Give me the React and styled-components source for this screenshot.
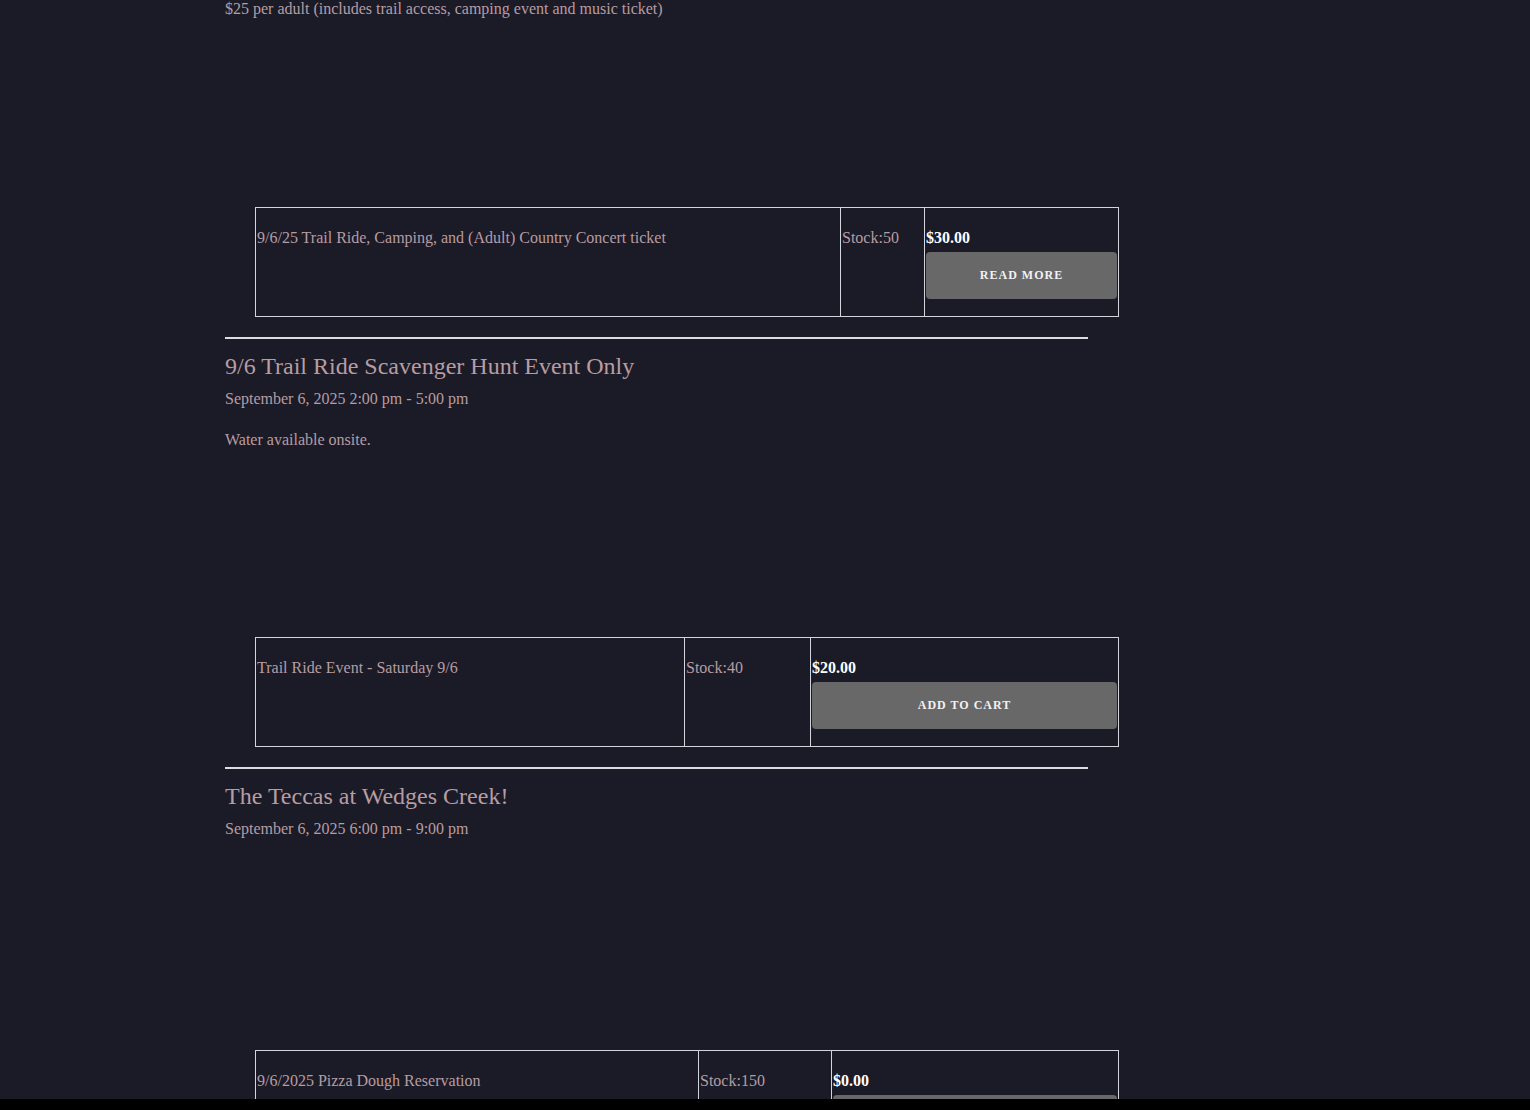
import React from 'react';
import styled, { createGlobalStyle } from 'styled-components';

const GlobalStyle = createGlobalStyle`
  html, body {
    margin: 0;
    padding: 0;
    background: #1a1b26;
  }
  body {
    font-family: "Liberation Serif", "Times New Roman", serif;
    font-size: 16px;
    color: #b89ca3;
  }
`;

const events = [
  {
    id: 'concert',
    tail: true,
    description: '$25 per adult (includes trail access, camping event and music ticket)',
    gap: 189,
    ticket: {
      name: '9/6/25 Trail Ride, Camping, and (Adult) Country Concert ticket',
      stock: 50,
      price: '$30.00',
      action: 'Read more',
      cols: [585, 84, 194],
    },
  },
  {
    id: 'scavenger',
    title: '9/6 Trail Ride Scavenger Hunt Event Only',
    date: 'September 6, 2025 2:00 pm - 5:00 pm',
    description: 'Water available onsite.',
    gap: 188,
    ticket: {
      name: 'Trail Ride Event - Saturday 9/6',
      stock: 40,
      price: '$20.00',
      action: 'Add to cart',
      cols: [429, 126, 308],
    },
  },
  {
    id: 'teccas',
    title: 'The Teccas at Wedges Creek!',
    date: 'September 6, 2025 6:00 pm - 9:00 pm',
    gap: 212,
    ticket: {
      name: '9/6/2025 Pizza Dough Reservation',
      stock: 150,
      price: '$0.00',
      action: 'Add to cart',
      cols: [443, 133, 287],
    },
  },
];

function TicketTable({ ticket }) {
  return (
    <Table>
      <colgroup>
        {ticket.cols.map((w, i) => (
          <col key={i} style={{ width: w }} />
        ))}
      </colgroup>
      <tbody>
        <tr>
          <Cell>{ticket.name}</Cell>
          <Cell>Stock:{ticket.stock}</Cell>
          <Cell>
            <Price>{ticket.price}</Price>
            <ActionButton>{ticket.action}</ActionButton>
          </Cell>
        </tr>
      </tbody>
    </Table>
  );
}

export default function App() {
  return (
    <>
      <GlobalStyle />
      <Page>
        <Main>
          {events.map((ev, i) => (
            <EventBlock key={ev.id}>
              {i > 0 && <Divider />}
              {ev.title && <EventTitle>{ev.title}</EventTitle>}
              {ev.date && <EventDate>{ev.date}</EventDate>}
              {ev.description && (
                <Description $first={ev.tail}>{ev.description}</Description>
              )}
              <MediaGap $height={ev.gap} />
              <TicketTable ticket={ev.ticket} />
            </EventBlock>
          ))}
        </Main>
      </Page>
      <BottomBar />
    </>
  );
}

const Page = styled.div`
  width: 1080px;
  margin: 0 auto;
`;

const Main = styled.main`
  width: 863px;
`;

const EventBlock = styled.section`
  display: flex;
  flex-direction: column;
`;

const Divider = styled.hr`
  margin: 20px 0 0 0;
  border: none;
  height: 2px;
  background: #dcdce2;
`;

const EventTitle = styled.h3`
  margin: 14px 0 0 0;
  font-size: 24px;
  font-weight: 400;
  line-height: 27px;
  color: #b89ca3;
`;

const EventDate = styled.div`
  margin-top: 10px;
  line-height: 18px;
`;

const Description = styled.p`
  margin: ${(p) => (p.$first ? '0' : '23px')} 0 0 0;
  line-height: 18px;
`;

const MediaGap = styled.div`
  height: ${(p) => p.$height}px;
`;

const Table = styled.table`
  margin-left: 30px;
  width: 863px;
  border-collapse: collapse;
  table-layout: fixed;
`;

const Cell = styled.td`
  border: 1px solid #d4d4dc;
  padding: 21px 1px 17px 1px;
  vertical-align: top;
  line-height: 18px;
  color: #b89ca3;
`;

const Price = styled.div`
  color: #ffffff;
  font-weight: 700;
  line-height: 18px;
`;

const ActionButton = styled.button`
  display: block;
  width: 100%;
  height: 47px;
  margin-top: 5px;
  border: none;
  border-radius: 4px;
  background: #686868;
  color: #f2f2f2;
  font-family: "Liberation Serif", "Times New Roman", serif;
  font-size: 12px;
  font-weight: 700;
  letter-spacing: 1px;
  text-transform: uppercase;
  cursor: pointer;
`;

const BottomBar = styled.div`
  position: fixed;
  left: 0;
  right: 0;
  bottom: 0;
  height: 11px;
  background: #000;
`;
